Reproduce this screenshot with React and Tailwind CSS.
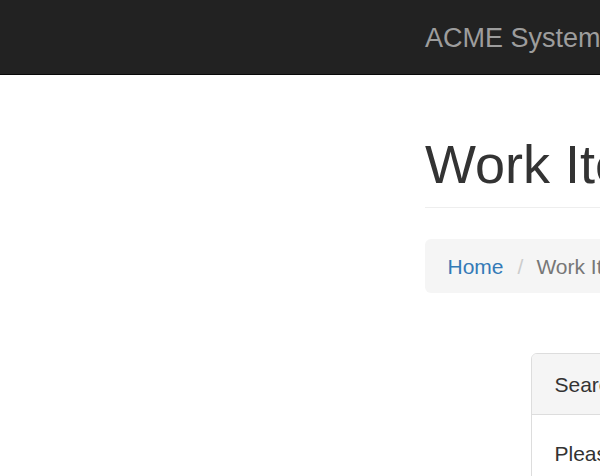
import React from 'react'

// Scaled Bootstrap 3 page: navbar, page header, breadcrumb, search panel
export default function App() {
  return (
    <div className="min-h-[476px] w-full overflow-hidden bg-white text-[21px] leading-[30px] text-[#333] font-['Liberation_Sans',Arial,sans-serif]">
      <nav className="h-[75px] border-b-[1.5px] border-[#080808] bg-[#222]">
        <div className="pl-[425px]">
          <div className="w-[1100px] py-[22.5px] text-[27px] leading-[30px] whitespace-nowrap text-[#9d9d9d]">
            ACME Systems
          </div>
        </div>
      </nav>

      <main className="pl-[425px]">
        <div className="w-[1100px]">
          <div className="mt-[59.5px] mb-[31px] border-b-[1.5px] border-[#eee] pb-[13.5px]">
            <h1 className="text-[54px] leading-[1.1] whitespace-nowrap text-[#333]">Work Items</h1>
          </div>

          <ol className="mb-[30px] flex items-center rounded-[6px] bg-[#f5f5f5] px-[22.5px] pt-[13px] pb-[11px] whitespace-nowrap">
            <li>
              <a href="#" className="text-[#337ab7]">Home</a>
            </li>
            <li className="pl-[14px] pr-[13px] text-[#ccc]">/</li>
            <li className="text-[#777]">Work Items</li>
          </ol>

          <div className="mt-[60px] ml-[106px] w-[900px] rounded-[6px] border-[1.5px] border-[#ddd] bg-white">
            <div className="rounded-t-[5px] border-b-[1.5px] border-[#ddd] bg-[#f5f5f5] px-[22.5px] pt-[16px] pb-[14px] whitespace-nowrap">
              Search Work Items
            </div>
            <div className="px-[22.5px] pt-[23.5px] pb-[22.5px] whitespace-nowrap">
              <p>Please enter your search criteria below.</p>
              <div className="mt-[15px] h-[120px]"></div>
            </div>
          </div>
        </div>
      </main>
    </div>
  )
}
